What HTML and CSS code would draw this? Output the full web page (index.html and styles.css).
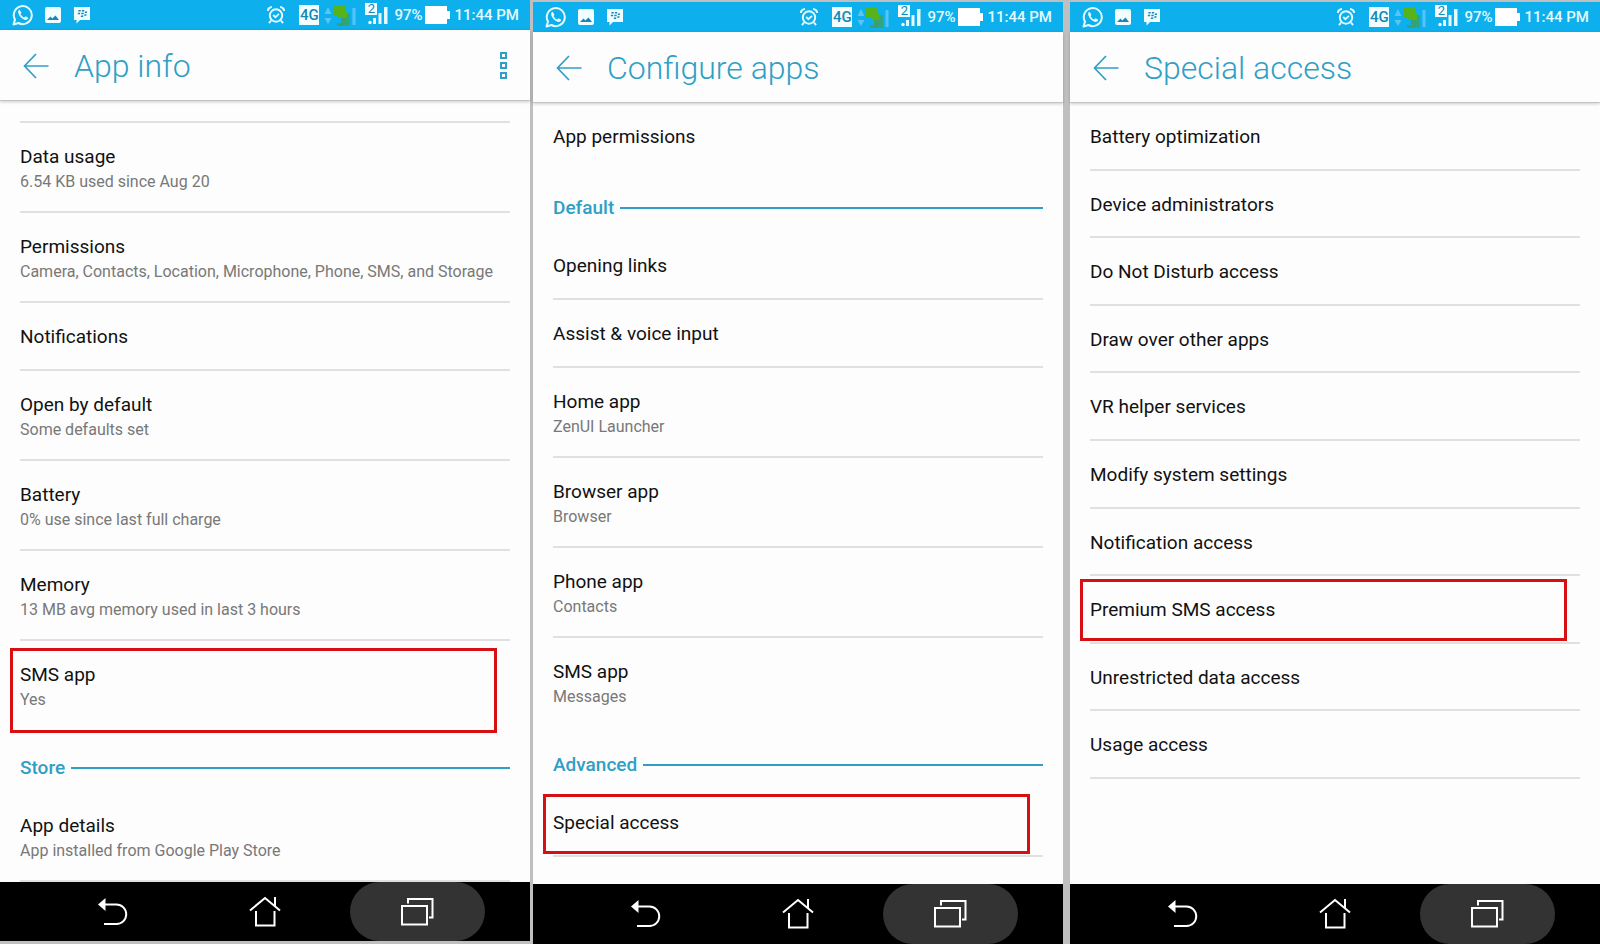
FILE: index.html
```
<!DOCTYPE html>
<html lang="en">
<head>
    <meta charset="UTF-8">
    <meta name="viewport" content="width=device-width, initial-scale=1.0">
    <title>Premium SMS access</title>
    <link rel="stylesheet" href="styles.css">
</head>
<body>
    <!-- Shared icons -->
    <svg class="sprite" aria-hidden="true">
        <symbol id="whatsapp" viewBox="0 0 22 22">
            <path d="M1.5 20.5 3 15.6A9 9 0 1 1 6.5 19Z" fill="none" stroke="#e4fbff" stroke-width="2" stroke-linejoin="round"/>
            <path d="M7.6 5.8c-1.5.5-1.8 2-1.2 3.7 1 2.9 3.3 5.2 6.1 6.2 1.9.6 3.5-.2 3.700-1.900l-2.700-1.500-1.300 1.300c-1.700-.7-3-1.900-3.700-3.500l1-1.300Z" fill="#e4fbff"/>
        </symbol>
        <symbol id="picture" viewBox="0 0 16 16">
            <rect width="16" height="16" rx="2" fill="#f2fdff"/>
            <path d="M2 13 5.500 9.500l1.800 2L10.500 8.500 14 13Z" fill="#1488b8"/>
        </symbol>
        <symbol id="bbm" viewBox="0 0 18 17">
            <path d="M1 0h16v13H7l-3.500 3.500V13H1Z" fill="#f2fdff"/>
            <path d="M5.500 3h2.400l-.4 1.600H5.200ZM9 3h2.400L11 4.600H8.700ZM5 5.700h2.400L7 7.300H4.700ZM8.500 5.700h2.400l-.4 1.600H8.200ZM12 4.400h2.200L13.800 6h-2.200ZM8 8.400h2.400L10 10H7.700ZM11.500 7.200h2.200l-.4 1.600h-2.200Z" fill="#1488b8"/>
        </symbol>
        <symbol id="alarm" viewBox="0 0 18 18">
            <g fill="none" stroke="#e4fbff">
                <circle cx="9" cy="9.500" r="6.200" stroke-width="2"/>
                <path d="M.8 5C1 2.800 2.500 1.300 5 1M17.200 5C17 2.800 15.500 1.300 13 1M4 14.500 2 17.200M14 14.500l2 2.700" stroke-width="2"/>
                <path d="M6.200 9l2.200 2.200L12 7.800" stroke-width="1.800"/>
            </g>
        </symbol>
        <symbol id="data" viewBox="0 0 32 22">
            <path d="M4 3 7.500 10H.5ZM4 20 .5 14h7Z" fill="#5cc4f2"/>
            <path d="M13 19h4v3h-4ZM17 14h5v8h-5Z" fill="#3aa070"/>
            <path d="M22 9h4v13h-4Z" fill="#2fa67c"/>
            <path d="M9 1h12v7h2v5h-9v-2H9Z" fill="#56b31c"/>
            <path d="M28.500 4h3v17h-3Z" fill="#56c4fa"/>
        </symbol>
        <symbol id="bars" viewBox="0 0 20 20">
            <circle cx="2" cy="17.500" r="1.700" fill="#fff"/>
            <path d="M5 13h3v6H5ZM10.500 8h3v11h-3ZM16 2h3.500v17H16Z" fill="#e4fbff"/>
        </symbol>
        <symbol id="battery" viewBox="0 0 26 18">
            <path d="M0 0h22v5h3v8h-3v5H0Z" fill="#fff"/>
        </symbol>
        <symbol id="arrow" viewBox="0 0 26 26">
            <path d="M25.500 13H1.500M13 1 1.500 13 13 25" fill="none" stroke="#309fc6" stroke-width="1.700"/>
        </symbol>
        <symbol id="nav-back" viewBox="0 0 32 32">
            <path d="M1 8.500 8.500 2v13Z" fill="#fff"/>
            <path d="M7 8.500h12.500a9.700 9.700 0 0 1 0 19.500H7" fill="none" stroke="#fff" stroke-width="2"/>
        </symbol>
        <symbol id="nav-home" viewBox="0 0 32 32">
            <path d="M1 14.500 16 2l15 12.500M26 10V1M7 15v14.500h18.500V15" fill="none" stroke="#fff" stroke-width="2"/>
        </symbol>
        <symbol id="nav-recent" viewBox="0 0 34 32">
            <path d="M2 10h25v18.500H2ZM8 7.500V3h24.500v18.500H29" fill="none" stroke="#fff" stroke-width="2"/>
        </symbol>
    </svg>

    <main class="screens">
        <!-- App info -->
        <section class="phone phone-info">
            <div class="status">
                <svg class="whatsapp"><use href="#whatsapp"/></svg>
                <svg class="picture"><use href="#picture"/></svg>
                <svg class="bbm"><use href="#bbm"/></svg>
                <svg class="alarm"><use href="#alarm"/></svg>
                <span class="network">4G</span>
                <svg class="data"><use href="#data"/></svg>
                <span class="sim"><svg><use href="#bars"/></svg><b>2</b></span>
                <span class="percent">97%</span>
                <svg class="battery"><use href="#battery"/></svg>
                <span class="time">11:44 PM</span>
            </div>
            <header class="bar">
                <button class="back" aria-label="Back"><svg><use href="#arrow"/></svg></button>
                <h1>App info</h1>
                <button class="more" aria-label="More options"><i></i><i></i><i></i></button>
            </header>
            <ul class="list">
                <li class="scrolled"></li>
                <li class="row"><a href="#">Data usage<small>6.54 KB used since Aug 20</small></a></li>
                <li class="row"><a href="#">Permissions<small>Camera, Contacts, Location, Microphone, Phone, SMS, and Storage</small></a></li>
                <li class="row"><a href="#">Notifications</a></li>
                <li class="row"><a href="#">Open by default<small>Some defaults set</small></a></li>
                <li class="row"><a href="#">Battery<small>0% use since last full charge</small></a></li>
                <li class="row"><a href="#">Memory<small>13 MB avg memory used in last 3 hours</small></a></li>
                <li class="row last marked marked-tall"><a href="#">SMS app<small>Yes</small></a></li>
                <li class="heading"><h2>Store</h2></li>
                <li class="row"><a href="#">App details<small>App installed from Google Play Store</small></a></li>
            </ul>
            <nav class="nav">
                <button aria-label="Back"><svg><use href="#nav-back"/></svg></button>
                <button aria-label="Home"><svg><use href="#nav-home"/></svg></button>
                <button class="pressed" aria-label="Recent apps"><svg><use href="#nav-recent"/></svg></button>
            </nav>
        </section>

        <!-- Configure apps -->
        <section class="phone">
            <div class="status">
                <svg class="whatsapp"><use href="#whatsapp"/></svg>
                <svg class="picture"><use href="#picture"/></svg>
                <svg class="bbm"><use href="#bbm"/></svg>
                <svg class="alarm"><use href="#alarm"/></svg>
                <span class="network">4G</span>
                <svg class="data"><use href="#data"/></svg>
                <span class="sim"><svg><use href="#bars"/></svg><b>2</b></span>
                <span class="percent">97%</span>
                <svg class="battery"><use href="#battery"/></svg>
                <span class="time">11:44 PM</span>
            </div>
            <header class="bar">
                <button class="back" aria-label="Back"><svg><use href="#arrow"/></svg></button>
                <h1>Configure apps</h1>
            </header>
            <ul class="list">
                <li class="row last"><a href="#">App permissions</a></li>
                <li class="heading"><h2>Default</h2></li>
                <li class="row"><a href="#">Opening links</a></li>
                <li class="row"><a href="#">Assist &amp; voice input</a></li>
                <li class="row"><a href="#">Home app<small>ZenUI Launcher</small></a></li>
                <li class="row"><a href="#">Browser app<small>Browser</small></a></li>
                <li class="row"><a href="#">Phone app<small>Contacts</small></a></li>
                <li class="row last"><a href="#">SMS app<small>Messages</small></a></li>
                <li class="heading"><h2>Advanced</h2></li>
                <li class="row marked"><a href="#">Special access</a></li>
            </ul>
            <nav class="nav">
                <button aria-label="Back"><svg><use href="#nav-back"/></svg></button>
                <button aria-label="Home"><svg><use href="#nav-home"/></svg></button>
                <button class="pressed" aria-label="Recent apps"><svg><use href="#nav-recent"/></svg></button>
            </nav>
        </section>

        <!-- Special access -->
        <section class="phone phone-access">
            <div class="status">
                <svg class="whatsapp"><use href="#whatsapp"/></svg>
                <svg class="picture"><use href="#picture"/></svg>
                <svg class="bbm"><use href="#bbm"/></svg>
                <svg class="alarm"><use href="#alarm"/></svg>
                <span class="network">4G</span>
                <svg class="data"><use href="#data"/></svg>
                <span class="sim"><svg><use href="#bars"/></svg><b>2</b></span>
                <span class="percent">97%</span>
                <svg class="battery"><use href="#battery"/></svg>
                <span class="time">11:44 PM</span>
            </div>
            <header class="bar">
                <button class="back" aria-label="Back"><svg><use href="#arrow"/></svg></button>
                <h1>Special access</h1>
            </header>
            <ul class="list">
                <li class="row"><a href="#">Battery optimization</a></li>
                <li class="row"><a href="#">Device administrators</a></li>
                <li class="row"><a href="#">Do Not Disturb access</a></li>
                <li class="row"><a href="#">Draw over other apps</a></li>
                <li class="row"><a href="#">VR helper services</a></li>
                <li class="row"><a href="#">Modify system settings</a></li>
                <li class="row"><a href="#">Notification access</a></li>
                <li class="row marked"><a href="#">Premium SMS access</a></li>
                <li class="row"><a href="#">Unrestricted data access</a></li>
                <li class="row"><a href="#">Usage access</a></li>
            </ul>
            <nav class="nav">
                <button aria-label="Back"><svg><use href="#nav-back"/></svg></button>
                <button aria-label="Home"><svg><use href="#nav-home"/></svg></button>
                <button class="pressed" aria-label="Recent apps"><svg><use href="#nav-recent"/></svg></button>
            </nav>
        </section>
    </main>
</body>
</html>
```
FILE: styles.css
```
:root {
    --status: #0dafed;
    --accent: #309fc6;
    --frame: #bfbfbf;
    --line: #e0e0e0;
    --mark: #d80f12;
}

* {
    box-sizing: border-box;
    margin: 0;
    padding: 0;
}

body {
    background: var(--frame);
    color: #111;
    font-family: Roboto, sans-serif;
}

button {
    border: none;
    background: none;
    cursor: pointer;
}

svg {
    display: block;
    flex: none;
}

.sprite {
    display: none;
}

.screens {
    display: flex;
    gap: 3px;
    min-height: 100vh;
}

.phone {
    flex: 1 1 0;
    min-width: 0;
    margin-top: 2px;
    display: flex;
    flex-direction: column;
    background: #fdfdfd;
}

.phone-info {
    margin-top: 0;
    margin-bottom: 3px;
}

.phone-access {
    margin-left: 4px;
}

/* Status bar */
.status {
    display: flex;
    align-items: center;
    height: 30px;
    padding: 0 11px 0 12px;
    background: var(--status);
    color: #e4fbff;
    font-size: 15px;
    font-weight: 500;
}

.whatsapp {
    width: 22px;
    height: 22px;
}

.picture {
    width: 16px;
    height: 16px;
    margin-left: 11px;
}

.bbm {
    width: 18px;
    height: 17px;
    margin-left: 12px;
}

.alarm {
    width: 18px;
    height: 18px;
    margin-left: auto;
}

.network {
    width: 20px;
    height: 20px;
    margin-left: 14px;
    background: #f2fdff;
    color: #1488b8;
    font-size: 15px;
    line-height: 20px;
    text-align: center;
}

.data {
    width: 32px;
    height: 22px;
    margin-left: 5px;
}

.sim {
    position: relative;
    margin-left: 12px;
}

.sim svg {
    width: 20px;
    height: 20px;
}

.sim b {
    position: absolute;
    top: -2px;
    left: -3px;
    width: 12px;
    height: 12px;
    background: #f2fdff;
    color: #1488b8;
    font-size: 13px;
    font-weight: 400;
    line-height: 12px;
    text-align: center;
}

.percent {
    margin-left: 6px;
}

.battery {
    width: 26px;
    height: 18px;
    margin-left: 2px;
}

.time {
    margin-left: 4px;
}

/* Title bar */
.bar {
    position: relative;
    display: flex;
    align-items: center;
    height: 71px;
    padding: 1px 23px 0;
    border-bottom: 1px solid #c4c4c4;
    box-shadow: 0 1px 3px rgba(0, 0, 0, 0.2);
}

.back svg {
    width: 26px;
    height: 26px;
}

.bar h1 {
    margin-left: 25px;
    color: var(--accent);
    font-size: 32px;
    font-weight: 300;
    line-height: 40px;
}

.more {
    margin-left: auto;
    display: grid;
    gap: 3px;
}

.more i {
    width: 7px;
    height: 7px;
    border: 2px solid var(--accent);
}

/* Settings list */
.list {
    flex: 1;
    padding: 0 20px;
    list-style: none;
}

.scrolled {
    height: 22px;
    border-bottom: 2px solid var(--line);
}

.row {
    position: relative;
    border-bottom: 2px solid var(--line);
}

.row.last {
    border-bottom-color: transparent;
}

.row a {
    display: block;
    padding: 22px 0 20px;
    color: inherit;
    font-size: 19px;
    line-height: 24px;
    text-decoration: none;
}

.row small {
    display: block;
    padding-top: 2px;
    margin-bottom: -2px;
    color: #787878;
    font-size: 16px;
    line-height: 22px;
}

.heading {
    display: flex;
    align-items: center;
    gap: 6px;
    height: 61px;
    padding-top: 13px;
}

.heading h2 {
    color: var(--accent);
    font-size: 19px;
    font-weight: 500;
    line-height: 24px;
}

.heading::after {
    content: "";
    flex: 1;
    height: 2px;
    background: var(--accent);
}

/* Red frame over the highlighted row */
.marked::after {
    content: "";
    position: absolute;
    top: 5px;
    right: 13px;
    bottom: 1px;
    left: -10px;
    border: 3px solid var(--mark);
    pointer-events: none;
}

.marked-tall::after {
    top: 7px;
    bottom: -4px;
}

/* The last screen spreads its rows over the free height */
.phone-access .list {
    display: flex;
    flex-direction: column;
    padding-bottom: 105px;
}

.phone-access .row {
    flex: 1;
}

.phone-access .row a {
    padding-bottom: 18px;
}

.phone-access .marked::after {
    top: 3px;
}

/* Navigation bar */
.nav {
    display: flex;
    justify-content: center;
    gap: 17px;
    height: 60px;
    background: #000;
}

.phone-info .nav {
    height: 59px;
}

.nav button {
    display: flex;
    align-items: center;
    justify-content: center;
    width: 135px;
    border-radius: 30px;
}

.nav svg {
    width: 34px;
    height: 32px;
}

.nav .pressed {
    background: #333;
}
```
